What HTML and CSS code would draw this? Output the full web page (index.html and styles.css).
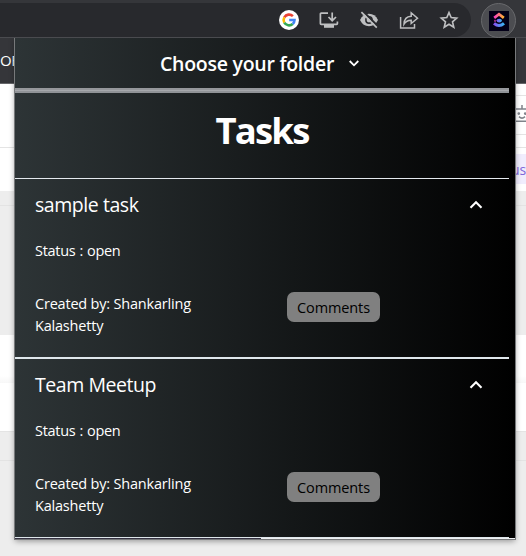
FILE: index.html
```html
<!DOCTYPE html>
<html lang="en">
<head>
<meta charset="utf-8">
<title>Tasks</title>
<link rel="stylesheet" href="styles.css">
</head>
<body>
<div class="browser">
  <div class="toolbar">
    <div class="omnibox">
      <svg class="google" viewBox="0 0 20 20"><circle cx="10" cy="10" r="10" fill="#fff"/><g fill="none" stroke-width="2.6"><path d="M5.3 7.3A5.5 5.5 0 0 1 13.9 6.2" stroke="#ea4335"/><path d="M5.3 12.7A5.6 5.6 0 0 1 5.3 7.3" stroke="#fbbc05"/><path d="M13.7 14A5.5 5.5 0 0 1 5.3 12.7" stroke="#34a853"/><path d="M10.2 10H15.5A5.5 5.5 0 0 1 13.7 14" stroke="#4285f4"/></g></svg>
      <svg class="tool" viewBox="0 0 20 20" fill="none" stroke="#bebfc1" stroke-width="1.7"><path d="M9 3.2H2.2Q1.4 3.2 1.4 4V13.6Q1.4 14.4 2.2 14.4H17.6Q18.4 14.4 18.4 13.6V11.5"/><path d="M13.2 2.5V10M9.5 7L13.2 10.7L17 7"/><path d="M5 14.6H15V17.8H5Z" fill="#bebfc1" stroke="none"/></svg>
      <svg class="tool" viewBox="0 0 20 20"><path d="M1 10Q4 3.8 10 3.8T19 10Q16 16.2 10 16.2T1 10Z" fill="#bebfc1"/><circle cx="10" cy="10" r="3.9" fill="#28292d"/><circle cx="10" cy="10" r="2.4" fill="#bebfc1"/><path d="M4 1.3L19.2 16.5" stroke="#28292d" stroke-width="2"/><path d="M2.4 2.2L17.8 17.6" stroke="#bebfc1" stroke-width="1.7"/></svg>
      <svg class="tool" viewBox="0 0 20 20" fill="none" stroke="#bebfc1" stroke-width="1.5"><path d="M1.6 7V18H15.5V14"/><path d="M5 14.2Q5.2 6.5 12.2 6.2V2.8L18.5 8.3L12.2 13.5V10.3Q7.5 10.2 5 14.2Z"/></svg>
      <svg class="tool" viewBox="0 0 20 20" fill="none" stroke="#bebfc1" stroke-width="1.6"><path d="M10 2.6L12.2 7.6L17.7 8.1L13.5 11.8L14.8 17.2L10 14.3L5.2 17.2L6.5 11.8L2.3 8.1L7.8 7.6Z"/></svg>
    </div>
    <div class="extension">
      <svg viewBox="0 0 20 20"><defs><linearGradient id="warm"><stop stop-color="#ff3cc7"/><stop offset="1" stop-color="#ffb52e"/></linearGradient><linearGradient id="cool"><stop stop-color="#8950f5"/><stop offset="1" stop-color="#36b8f5"/></linearGradient></defs><rect width="20" height="20" fill="#030018"/><path d="M5.2 6.9L10 3.2L14.8 6.9" fill="none" stroke="url(#warm)" stroke-width="2.8"/><ellipse cx="10.2" cy="9.6" rx="2.7" ry="1.9" fill="url(#cool)"/><path d="M6.4 9Q5.4 9.8 6.4 10.7" fill="none" stroke="#ed48bd" stroke-width="1.2"/><path d="M5 12.3Q10 16.6 15 12.3" fill="none" stroke="url(#cool)" stroke-width="3"/></svg>
    </div>
  </div>
  <div class="page-header">OF</div>
  <div class="page-tools">
    <div class="robot-row"><svg viewBox="0 0 20 20" fill="none" stroke="#80838a" stroke-width="1.5"><path d="M1 5H15V17.3H1ZM8 5V1"/><path d="M5 12.6Q8 15.6 11 12.6"/><circle cx="4.8" cy="9.6" r=".6"/><circle cx="11.2" cy="9.6" r=".6"/></svg></div>
  </div>
  <div class="page-filter"><span class="filter-tag">us</span></div>
  <div class="page-band"><div class="band-line"></div></div>
  <div class="page-row"></div>
  <div class="page-row lower"></div>
  <div class="page-rest"></div>
</div>
<main class="popup">
  <header class="folder"><span>Choose your folder</span><svg viewBox="0 0 12 12"><path d="M1.7 4L6 8.3L10.3 4"/></svg></header>
  <div class="divider"></div>
  <h1>Tasks</h1>
  <section class="task">
    <div class="task-head"><h2>sample task</h2><svg viewBox="0 0 14 14"><path d="M1.5 9.8L7 4.3L12.5 9.8"/></svg></div>
    <p class="status">Status : open</p>
    <div class="task-foot"><p class="creator">Created by: Shankarling<br>Kalashetty</p><button>Comments</button></div>
  </section>
  <section class="task last">
    <div class="task-head"><h2>Team Meetup</h2><svg viewBox="0 0 14 14"><path d="M1.5 9.8L7 4.3L12.5 9.8"/></svg></div>
    <p class="status">Status : open</p>
    <div class="task-foot"><p class="creator">Created by: Shankarling<br>Kalashetty</p><button>Comments</button></div>
  </section>
  <div class="popup-end"></div>
</main>
</body>
</html>
```
FILE: styles.css
```css
* { box-sizing: border-box; }
body { margin: 0; font-family: "Open Sans", "Noto Sans", sans-serif; color: #fff; overflow: hidden; }
h1, h2, p { margin: 0; font-weight: 400; }
.browser { width: 526px; height: 556px; display: flex; flex-direction: column; background: #fff; overflow: hidden; }
.toolbar { height: 38px; display: flex; align-items: flex-start; gap: 10px; padding-top: 3px; background: #35363a; border-bottom: 1px solid #4a4b4f; flex: none; }
.omnibox { width: 471px; height: 34px; display: flex; align-items: center; justify-content: flex-end; gap: 20px; padding-right: 12px; background: #28292d; border-radius: 0 17px 17px 0; }
.google { width: 20px; height: 20px; }
.tool { width: 20px; height: 20px; }
.extension { width: 35px; height: 35px; border: 1px solid #68696c; border-radius: 50%; background: #4c4d51; display: grid; place-items: center; }
.extension svg { width: 20px; height: 20px; }
.page-header { height: 46px; flex: none; background: #35363a; border-bottom: 1px solid #66676a; padding-top: 11px; font-size: 15px; line-height: 22px; letter-spacing: -.3px; }
.page-tools { height: 64px; flex: none; border-bottom: 1px solid #e4e4e4; padding: 11px 0 13px 514px; }
.robot-row { height: 40px; border: solid #e4e4e4; border-width: 1px 0; padding-top: 8px; }
.robot-row svg { width: 20px; height: 20px; display: block; }
.page-filter { height: 43px; flex: none; padding: 6px 0 7px 511px; }
.filter-tag { display: block; height: 30px; background: #f0edfd; color: #8068d9; font-size: 14px; line-height: 31px; }
.page-band { height: 144px; flex: none; background: #ededed; padding-top: 14px; }
.band-line { height: 1px; background: #e3e3e3; }
.page-row { height: 48px; flex: none; background: linear-gradient(#fff 85%, #f7f7f7); }
.page-row.lower { background: #fff; }
.page-rest { flex: 1; background: linear-gradient(#e4e4e4 0 1px, #ededed 1px 29px, #e3e3e3 29px 30px, #ededed 30px); }
.popup { position: absolute; left: 15px; top: 38px; width: 500px; height: 501px; display: flex; flex-direction: column; background: linear-gradient(to right, #2d3436, #000); box-shadow: 0 0 0 1px #77797b, 0 2px 6px rgba(0,0,0,.4); clip-path: inset(0 -10px -10px -10px); }
.folder { height: 50px; display: flex; align-items: center; gap: 14px; padding: 0 0 0 145px; font-size: 19.5px; font-weight: 600; letter-spacing: -.26px; flex: none; }
.folder svg { width: 12px; height: 12px; }
svg { flex: none; }
.folder path, .task-head path { fill: none; stroke: #fff; stroke-width: 1.8; }
.divider { width: 494px; height: 5px; flex: none; background: linear-gradient(#95979b 0 2px, #a6a8ac 2px 3px, #909397 3px); }
h1 { width: 494px; height: 86px; flex: none; border-bottom: 1px solid #e4e9ee; text-align: center; font-size: 36.5px; font-weight: 700; line-height: 74px; letter-spacing: -1.8px; }
.task { width: 494px; height: 180px; flex: none; border-bottom: 2px solid #dfe7ec; padding: 12px 26px 0 20px; }
.task.last { height: 179px; border-bottom-width: 1px; }
.task-head { height: 28px; display: flex; align-items: center; justify-content: space-between; }
.task-head svg { width: 14px; height: 14px; }
.task-head path { stroke-width: 2.1; }
h2 { font-size: 19.5px; line-height: 28px; letter-spacing: -.45px; }
.status { margin-top: 21px; font-size: 14.5px; line-height: 22px; letter-spacing: -.3px; word-spacing: .6px; }
.task-foot { display: grid; grid-template-columns: 252px 93px; align-items: start; margin-top: 30px; }
.creator { padding-top: 1px; font-size: 14.5px; line-height: 22px; letter-spacing: -.2px; }
button { height: 30px; border: 0; border-radius: 7px; background: #808080; color: #000; font: 14.5px "Open Sans", sans-serif; letter-spacing: -.1px; padding: 0; }
.popup-end { height: 1px; background: linear-gradient(to right, #343141 246px, #eef0f2 246px); }
```
